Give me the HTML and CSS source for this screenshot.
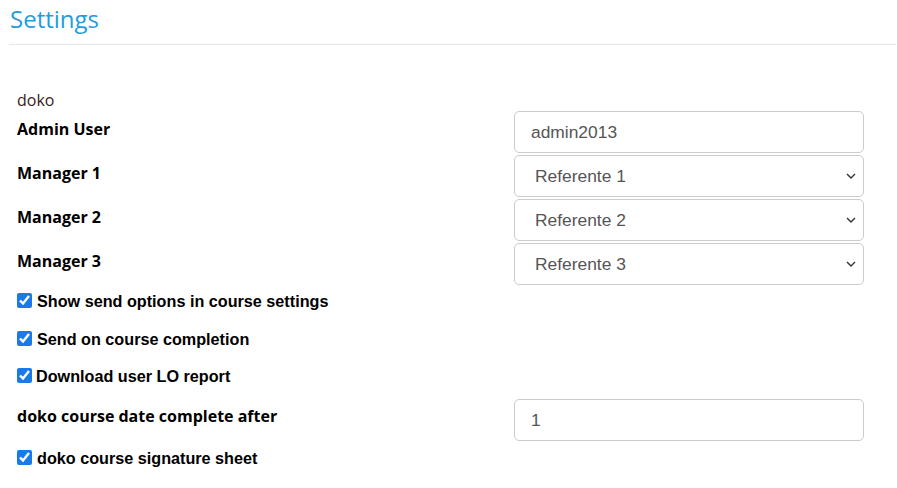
FILE: index.html
```html
<!DOCTYPE html>
<html lang="en">
<head>
    <meta charset="UTF-8">
    <meta name="viewport" content="width=device-width, initial-scale=1.0">
    <title>Settings</title>
    <link rel="stylesheet" href="styles.css">
</head>
<body>
    <!-- Cabecera -->
    <div class="page-header">
        <h1>Settings</h1>
    </div>

    <form class="settings-form">
        <div class="section-name">doko</div>

        <!-- Usuario y responsables -->
        <div class="field-row">
            <label for="admin-user">Admin User</label>
            <input type="text" id="admin-user" class="form-control" value="admin2013">
        </div>
        <div class="field-row">
            <label for="manager1">Manager 1</label>
            <div class="select-wrap">
                <select id="manager1" class="form-control">
                    <option>Referente 1</option>
                    <option>Referente 2</option>
                    <option>Referente 3</option>
                </select>
                <svg class="chevron" viewBox="0 0 10 6" width="10" height="6"><path d="M1 1 L5 5 L9 1" fill="none" stroke="#333" stroke-width="1.4"/></svg>
            </div>
        </div>
        <div class="field-row">
            <label for="manager2">Manager 2</label>
            <div class="select-wrap">
                <select id="manager2" class="form-control">
                    <option>Referente 1</option>
                    <option selected>Referente 2</option>
                    <option>Referente 3</option>
                </select>
                <svg class="chevron" viewBox="0 0 10 6" width="10" height="6"><path d="M1 1 L5 5 L9 1" fill="none" stroke="#333" stroke-width="1.4"/></svg>
            </div>
        </div>
        <div class="field-row">
            <label for="manager3">Manager 3</label>
            <div class="select-wrap">
                <select id="manager3" class="form-control">
                    <option>Referente 1</option>
                    <option>Referente 2</option>
                    <option selected>Referente 3</option>
                </select>
                <svg class="chevron" viewBox="0 0 10 6" width="10" height="6"><path d="M1 1 L5 5 L9 1" fill="none" stroke="#333" stroke-width="1.4"/></svg>
            </div>
        </div>

        <!-- Opciones de envío -->
        <label class="check-row first"><input type="checkbox" checked> Show send options in course settings</label>
        <label class="check-row"><input type="checkbox" checked> Send on course completion</label>
        <label class="check-row tight"><input type="checkbox" checked>Download user LO report</label>

        <div class="field-row days-row">
            <label for="complete-after">doko course date complete after</label>
            <input type="text" id="complete-after" class="form-control" value="1">
        </div>

        <label class="check-row last"><input type="checkbox" checked> doko course signature sheet</label>
    </form>
</body>
</html>
```

FILE: styles.css
```css
body {
    margin: 0;
    font-family: 'Open Sans', sans-serif;
    color: #000;
    background: #fff;
}
.page-header {
    margin: 0 1px 0 9px;
    border-bottom: 1px solid #e6e6e6;
    height: 44px;
}
h1 {
    margin: 0;
    padding: 2px 0 0 1px;
    font-size: 24px;
    font-weight: 400;
    line-height: 34px;
    color: #1f9ddf;
}
.settings-form {
    width: 847px;
    padding: 44px 0 0 17px;
}
.section-name {
    font-size: 16px;
    line-height: 22px;
    color: #3a1a1a;
}
.field-row {
    display: grid;
    grid-template-columns: 497px 350px;
    height: 42px;
    margin-bottom: 2px;
}
.field-row label {
    font-size: 16px;
    font-weight: 700;
    line-height: 22px;
    padding-top: 7px;
}
.form-control {
    box-sizing: border-box;
    width: 100%;
    height: 42px;
    padding: 0 16px;
    border: 1px solid #ccc;
    border-radius: 5px;
    font-family: 'Liberation Sans', Arial, sans-serif;
    font-size: 17.4px;
    color: #555;
    background: #fff;
}
.select-wrap {
    position: relative;
}
select.form-control {
    appearance: none;
    -webkit-appearance: none;
    padding-left: 20px;
}
.chevron {
    position: absolute;
    right: 8px;
    top: 18px;
    pointer-events: none;
}
.check-row {
    display: flex;
    align-items: center;
    gap: 5px;
    font-family: 'Liberation Sans', Arial, sans-serif;
    font-size: 16.2px;
    font-weight: 700;
    height: 20px;
    margin-top: 18px;
}
.check-row input {
    width: 15px;
    height: 15px;
    margin: 0 0 2px 0;
    accent-color: #1a7ae8;
}
.check-row.first {
    margin-top: 6px;
}
.check-row.tight {
    gap: 4px;
    margin-top: 17px;
}
.days-row {
    margin-top: 13px;
}
.days-row label {
    padding-top: 6px;
}
.check-row.last {
    margin-top: 7px;
}
```
